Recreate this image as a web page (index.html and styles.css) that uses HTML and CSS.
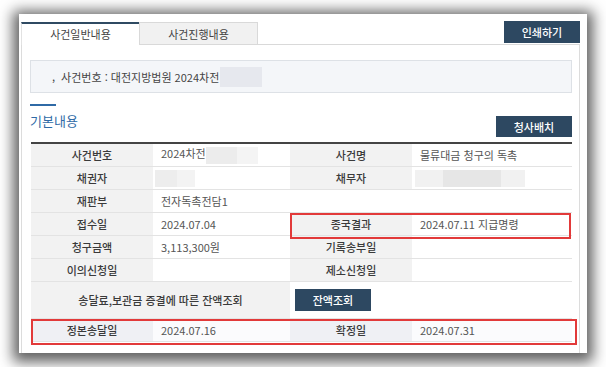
FILE: index.html
```html
<!DOCTYPE html>
<html lang="ko">
<head>
  <meta charset="UTF-8">
  <title>사건일반내용</title>
  <link rel="stylesheet" href="styles.css">
</head>
<body>

  <div class="panel">
    <!-- Tabs -->
    <div class="tabbar">
      <div class="tab active">사건일반내용</div>
      <div class="tab">사건진행내용</div>
      <button class="btn btn-print">인쇄하기</button>
    </div>

    <div class="content">
      <div class="case-box">
        <span class="bullet">,</span> 사건번호 : 대전지방법원 2024차전<span class="mask mask-case"></span>
      </div>

      <div class="section-head">
        <h3>기본내용</h3>
        <button class="btn btn-map">청사배치</button>
      </div>

      <div class="table-wrap">
        <table class="info">
          <colgroup>
            <col class="c-label">
            <col class="c-value">
            <col class="c-label">
            <col class="c-value2">
          </colgroup>
          <tr>
            <th>사건번호</th>
            <td>2024차전<span class="mask mask-no"></span></td>
            <th>사건명</th>
            <td>물류대금 청구의 독촉</td>
          </tr>
          <tr>
            <th>채권자</th>
            <td><span class="mask mask-creditor"></span></td>
            <th>채무자</th>
            <td><span class="mask mask-debtor"><span></span></span></td>
          </tr>
          <tr>
            <th>재판부</th>
            <td colspan="3">전자독촉전담1</td>
          </tr>
          <tr>
            <th>접수일</th>
            <td>2024.07.04</td>
            <th>종국결과</th>
            <td>2024.07.11 지급명령</td>
          </tr>
          <tr>
            <th>청구금액</th>
            <td>3,113,300원</td>
            <th>기록송부일</th>
            <td></td>
          </tr>
          <tr>
            <th>이의신청일</th>
            <td></td>
            <th>제소신청일</th>
            <td></td>
          </tr>
          <tr class="row-tall">
            <th colspan="2">송달료,보관금 증결에 따른 잔액조회</th>
            <td colspan="2"><button class="btn btn-balance">잔액조회</button></td>
          </tr>
          <tr class="row-last">
            <th>정본송달일</th>
            <td>2024.07.16</td>
            <th>확정일</th>
            <td>2024.07.31</td>
          </tr>
        </table>

        <!-- red highlight marks -->
        <div class="mark mark-result"></div>
        <div class="mark mark-final"></div>
      </div>
    </div>
  </div>

</body>
</html>
```

FILE: styles.css
```css
body {
  margin: 0;
  padding: 14px 19px;
  background: #fff;
  font-family: "Noto Sans CJK KR", "Noto Sans", sans-serif;
  font-size: 11px;
  color: #555;
}

.panel {
  width: 568px;
  height: 339px;
  box-sizing: border-box;
  padding: 7px 7px 0 2px;
  background: #fff;
  box-shadow: 0 3px 13px 6px rgba(0, 0, 0, 0.62);
  display: flex;
  flex-direction: column;
}

/* Tabs */
.tabbar {
  display: flex;
  align-items: flex-end;
  height: 23px;
  border-bottom: 1px solid #d9d9d9;
}

.tab {
  height: 23px;
  box-sizing: border-box;
  display: flex;
  align-items: center;
  justify-content: center;
  color: #444;
  margin-bottom: -1px;
}

.tab.active {
  width: 118px;
  border-top: 2px solid #2f4a62;
  border-left: 1px solid #e2e2e2;
  background: #fff;
  padding-bottom: 1px;
}

.tab:not(.active) {
  width: 119px;
  background: #f1f1f1;
  border: 1px solid #d9d9d9;
}

.btn {
  background: #2d4861;
  color: #fff;
  border: none;
  font-family: inherit;
  font-size: 11px;
  font-weight: 500;
  padding: 0;
  cursor: pointer;
}

.btn-print {
  margin-left: auto;
  width: 76px;
  height: 22px;
  margin-bottom: 1px;
}

/* Content */
.content {
  flex: 1;
  border-left: 1px solid #dcdcdc;
  border-right: 1px solid #dcdcdc;
  padding: 15px 7px 0 8px;
}

.case-box {
  height: 33px;
  box-sizing: border-box;
  background: #f4f6f9;
  border: 1px solid #dde1e6;
  display: flex;
  align-items: center;
  padding-left: 21px;
  color: #444;
}

.bullet {
  margin-right: 6px;
  position: relative;
  top: -1px;
}

.mask {
  display: inline-block;
  background: #e6e8ee;
  vertical-align: middle;
}

.mask-case {
  width: 42px;
  height: 20px;
  margin-left: 1px;
}

.section-head {
  display: flex;
  justify-content: space-between;
  align-items: flex-end;
  margin-top: 11px;
}

.section-head h3 {
  margin: 0;
  font-size: 13px;
  font-weight: normal;
  color: #2f6aa6;
  line-height: 18px;
  white-space: nowrap;
}

.section-head h3::before {
  content: "";
  display: block;
  width: 26px;
  height: 2px;
  background: #2f6aa6;
  margin-bottom: 6px;
}

.btn-map {
  width: 76px;
  height: 21px;
  margin-bottom: -7px;
}

/* Table */
.table-wrap {
  position: relative;
  margin: 12px 0 0 1px;
}

.info {
  width: 541px;
  border-collapse: collapse;
  table-layout: fixed;
  border-top: 2px solid #444;
}

.c-label { width: 122px; }
.c-value { width: 137px; }
.c-value2 { width: 160px; }

.info th,
.info td {
  height: 22px;
  padding: 0;
  line-height: 14px;
  border-bottom: 1px solid #e3e3e3;
}

.info th {
  background: #f2f2f2;
  color: #3a3a3a;
  font-weight: 500;
  text-align: center;
}

.info td {
  padding-left: 8px;
  color: #555;
}

.info .row-tall th,
.info .row-tall td {
  height: 36px;
}

.info .row-tall td {
  padding-left: 5px;
}

.info .row-last th {
  background: #eff0f4;
}

.info .row-last td {
  background: #fbfbfd;
}

.btn-balance {
  width: 76px;
  height: 22px;
  display: block;
}

.mask-no {
  width: 52px;
  height: 17px;
  background: linear-gradient(90deg, #ececec 60%, #f4f4f4 60%);
}

.mask-creditor {
  width: 40px;
  height: 17px;
  margin-left: -6px;
  background: linear-gradient(90deg, #ededed 55%, #f3f3f3 55%);
}

.mask-debtor {
  width: 110px;
  height: 17px;
  margin-left: -5px;
  background: #f1f1f1;
  position: relative;
}

.mask-debtor span {
  position: absolute;
  left: 28px;
  top: 0;
  width: 58px;
  height: 17px;
  background: #e6e6e6;
}

/* red highlight marks */
.mark {
  position: absolute;
  border: 2px solid #e23a3a;
  box-sizing: border-box;
}

.mark-result {
  left: 259px;
  top: 71px;
  width: 281px;
  height: 26px;
}

.mark-final {
  left: 0;
  top: 177px;
  width: 546px;
  height: 26px;
}
```
